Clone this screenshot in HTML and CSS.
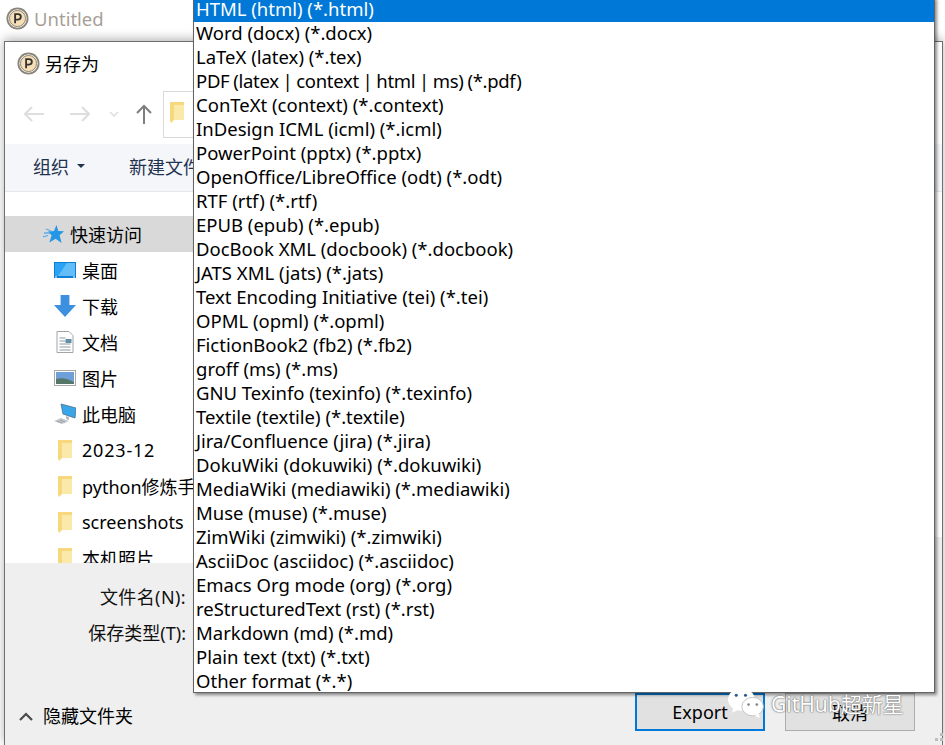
FILE: index.html
```html
<!DOCTYPE html>
<html lang="zh">
<head>
<meta charset="utf-8">
<title>Export</title>
<link rel="stylesheet" href="styles.css">
</head>
<body>
<header class="appbar">
  <svg class="logo" viewBox="0 0 24 24"><circle cx="12" cy="12" r="11.500" fill="#8a8378"/><circle cx="12" cy="12" r="9.600" fill="#fff"/><circle cx="12" cy="12" r="8.400" fill="#f6dfb4" stroke="#6b6255" stroke-width=".8"/><path d="M9.500 17V7.500h3.200a2.800 2.800 0 0 1 0 5.600H9.500" fill="none" stroke="#333" stroke-width="1.900"/></svg>
  <span class="apptitle">Untitled</span>
</header>
<main class="dialog">
  <div class="dlgtitle">
    <svg class="logo" viewBox="0 0 24 24"><circle cx="12" cy="12" r="11.500" fill="#8a8378"/><circle cx="12" cy="12" r="9.600" fill="#fff"/><circle cx="12" cy="12" r="8.400" fill="#f6dfb4" stroke="#6b6255" stroke-width=".8"/><path d="M9.500 17V7.500h3.200a2.800 2.800 0 0 1 0 5.600H9.500" fill="none" stroke="#333" stroke-width="1.900"/></svg>
    <span>另存为</span>
  </div>
  <div class="navbar">
    <svg class="nav n1" viewBox="0 0 20 16"><path d="M1 8h19M8 1 1 8l7 7" fill="none" stroke="#dedede" stroke-width="2.200"/></svg>
    <svg class="nav n2" viewBox="0 0 20 16"><path d="M0 8h19M12 1l7 7-7 7" fill="none" stroke="#dedede" stroke-width="2.200"/></svg>
    <svg class="chev" viewBox="0 0 10 6"><path d="M1 1l4 4 4-4" fill="none" stroke="#dedede" stroke-width="1.600"/></svg>
    <svg class="up" viewBox="0 0 16 20"><path d="M8 20V2M1 9l7-7 7 7" fill="none" stroke="#7e7e7e" stroke-width="2"/></svg>
    <div class="path"><svg class="folder" viewBox="0 0 14 21"><path d="M0 0h14v18H4l-3 3-1-2z" fill="#f7d87c"/><path d="M4 3h10v15H4z" fill="#fbe9a9"/></svg></div>
  </div>
  <div class="toolbar">
    <span class="org">组织<i class="caret"></i></span>
    <span>新建文件夹</span>
  </div>
  <nav class="tree">
    <div class="row quick">
      <svg class="ticon" viewBox="0 0 21 18"><path d="M13.500 0l1.800 6 5.700.2-4.400 4 2 7.800-6-4.200-6.200 3.700 2.200-7.300-3.600-3.800 6-.4z" fill="#2496e6"/><path d="M3 4l5 2M1 8h6M0 12l5-1.500" stroke="#58aeea" stroke-width="1.300"/></svg>
      <span>快速访问</span>
    </div>
    <div class="row sub">
      <span class="ibox"><svg viewBox="0 0 22 16"><rect width="22" height="16" fill="#0f7fd6"/><path d="M1 1h20v13H1z" fill="#2aa3f5"/><path d="M13 1h8v13H4z" fill="#62bdf8"/><path d="M1 15h2M19 15h2" stroke="#fff"/></svg></span>
      <span>桌面</span>
    </div>
    <div class="row sub">
      <span class="ibox"><svg viewBox="0 0 20 20"><path d="M6 0h8v9h6l-10 11L0 9h6z" fill="#3d8fe0"/></svg></span>
      <span>下载</span>
    </div>
    <div class="row sub">
      <span class="ibox"><svg viewBox="0 0 17 22"><path d="M.500.500h12l4 4v17H.500z" fill="#fff" stroke="#a4a4a4"/><path d="M3 7h6M3 10h6M3 13h11M3 16h11M3 19h11" stroke="#8d9aa6"/><rect x="9" y="8" width="6" height="4" fill="#5f8fa8"/></svg></span>
      <span>文档</span>
    </div>
    <div class="row sub">
      <span class="ibox"><svg viewBox="0 0 22 16"><rect x=".500" y=".500" width="21" height="15" fill="#fff" stroke="#a8a8a8"/><rect x="2" y="2" width="18" height="12" fill="#6f9fd8"/><path d="M2 9c6-2 12 0 18 3v2H2z" fill="#55776a"/></svg></span>
      <span>图片</span>
    </div>
    <div class="row sub">
      <span class="ibox"><svg viewBox="0 0 22 20"><path d="M7 0l15 4-1 10-12-4z" fill="#3aa6ea" stroke="#4b6f8a" stroke-width=".8"/><path d="M12 12l3 1v3l-3-1z" fill="#b5bcc2"/><path d="M0 17l7-3 8 3-7 3z" fill="#c3c8cc"/><path d="M3 17l5 2M6 16l5 2" stroke="#8e959b" stroke-width=".8"/></svg></span>
      <span>此电脑</span>
    </div>
    <div class="row sub">
      <span class="ibox"><svg class="folder" viewBox="0 0 14 21"><path d="M0 0h14v18H4l-3 3-1-2z" fill="#f7d87c"/><path d="M4 3h10v15H4z" fill="#fbe9a9"/></svg></span>
      <span class="digits">2023-12</span>
    </div>
    <div class="row sub">
      <span class="ibox"><svg class="folder" viewBox="0 0 14 21"><path d="M0 0h14v18H4l-3 3-1-2z" fill="#f7d87c"/><path d="M4 3h10v15H4z" fill="#fbe9a9"/></svg></span>
      <span>python修炼手册</span>
    </div>
    <div class="row sub">
      <span class="ibox"><svg class="folder" viewBox="0 0 14 21"><path d="M0 0h14v18H4l-3 3-1-2z" fill="#f7d87c"/><path d="M4 3h10v15H4z" fill="#fbe9a9"/></svg></span>
      <span>screenshots</span>
    </div>
    <div class="row sub">
      <span class="ibox"><svg class="folder" viewBox="0 0 14 21"><path d="M0 0h14v18H4l-3 3-1-2z" fill="#f7d87c"/><path d="M4 3h10v15H4z" fill="#fbe9a9"/></svg></span>
      <span>本机照片</span>
    </div>
  </nav>
  <section class="form">
    <div class="labels">
      <span class="wide">文件名(N):</span>
      <span>保存类型(T):</span>
    </div>
    <div class="actions">
      <span class="hide"><svg class="hidechev" viewBox="0 0 14 9"><path d="M1 8l6-6 6 6" fill="none" stroke="#4a4a4a" stroke-width="2.200"/></svg>隐藏文件夹</span>
      <div class="buttons">
        <button class="btn primary">Export</button>
        <button class="btn">取消</button>
      </div>
    </div>
  </section>
</main>
<div class="sidefill"></div>
<svg class="grip" viewBox="0 0 10 10"><path d="M7 0h3v3H7zM2 5h3v3H2zM7 5h3v3H7z" fill="#bdbdbd"/></svg>
<ul class="dropdown">
  <li class="sel">HTML (html) (*.html)</li>
  <li>Word (docx) (*.docx)</li>
  <li>LaTeX (latex) (*.tex)</li>
  <li class="tight">PDF (latex | context | html | ms) (*.pdf)</li>
  <li>ConTeXt (context) (*.context)</li>
  <li>InDesign ICML (icml) (*.icml)</li>
  <li>PowerPoint (pptx) (*.pptx)</li>
  <li>OpenOffice/LibreOffice (odt) (*.odt)</li>
  <li>RTF (rtf) (*.rtf)</li>
  <li>EPUB (epub) (*.epub)</li>
  <li>DocBook XML (docbook) (*.docbook)</li>
  <li>JATS XML (jats) (*.jats)</li>
  <li>Text Encoding Initiative (tei) (*.tei)</li>
  <li>OPML (opml) (*.opml)</li>
  <li>FictionBook2 (fb2) (*.fb2)</li>
  <li>groff (ms) (*.ms)</li>
  <li>GNU Texinfo (texinfo) (*.texinfo)</li>
  <li>Textile (textile) (*.textile)</li>
  <li>Jira/Confluence (jira) (*.jira)</li>
  <li>DokuWiki (dokuwiki) (*.dokuwiki)</li>
  <li>MediaWiki (mediawiki) (*.mediawiki)</li>
  <li>Muse (muse) (*.muse)</li>
  <li>ZimWiki (zimwiki) (*.zimwiki)</li>
  <li>AsciiDoc (asciidoc) (*.asciidoc)</li>
  <li>Emacs Org mode (org) (*.org)</li>
  <li>reStructuredText (rst) (*.rst)</li>
  <li>Markdown (md) (*.md)</li>
  <li>Plain text (txt) (*.txt)</li>
  <li>Other format (*.*)</li>
</ul>
<div class="watermark">
  <svg class="wechat" viewBox="0 0 36 30"><ellipse cx="14" cy="12" rx="13" ry="11" fill="#fff"/><path d="M6 20l-1 5 6-3z" fill="#fff"/><ellipse cx="25" cy="19" rx="10.500" ry="9" fill="#fff" stroke="#bbb" stroke-width=".8"/><path d="M31 26l1 4-5-2z" fill="#fff"/><circle cx="9" cy="8" r="1.500" fill="#2a5a90"/><circle cx="18" cy="8" r="1.500" fill="#2a5a90"/><circle cx="21" cy="17" r="1.300" fill="#888"/><circle cx="29" cy="17" r="1.300" fill="#888"/></svg>
  <span>GitHub超新星</span>
</div>
```
FILE: styles.css
```css
* { box-sizing: border-box; }
html, body { margin: 0; padding: 0; }
body {
  width: 945px;
  height: 745px;
  overflow: hidden;
  position: relative;
  background: #fff;
  font-family: "Noto Sans", "Noto Sans CJK SC", sans-serif;
  font-size: 18px;
  color: #000;
}
.appbar {
  height: 41px;
  display: flex;
  align-items: center;
  gap: 5px;
  padding: 0 0 5px 6px;
}
.logo { width: 23px; height: 23px; flex: none; }
.apptitle { font-size: 18.500px; color: #a79f97; }
.dialog {
  height: 704px;
  margin: 0 2px 0 4px;
  border: 1px solid #6f6f6f;
  border-bottom: 0;
  display: flex;
  flex-direction: column;
  background: #fff;
  box-shadow: 0 -2px 10px rgba(0,0,0,.3);
}
.dlgtitle {
  height: 42px;
  padding: 0 0 0 12px;
  display: flex;
  align-items: center;
  gap: 5px;
}
.navbar {
  height: 60px;
  display: flex;
  align-items: center;
  padding-left: 19px;
}
.nav { width: 20px; height: 16px; flex: none; }
.n2 { margin-left: 26px; }
.chev { width: 10px; height: 6px; margin-left: 19px; flex: none; }
.up { width: 16px; height: 20px; margin-left: 17px; flex: none; }
.path {
  width: 300px;
  height: 47px;
  margin-left: 11px;
  border: 1px solid #d9d9d9;
  padding: 10px 0 0 6px;
}
.folder { width: 14px; height: 21px; display: block; }
.toolbar {
  height: 48px;
  background: #f4f6f9;
  border-bottom: 1px solid #e6e7e9;
  display: flex;
  align-items: center;
  padding: 0 0 3px 28px;
  gap: 44px;
  color: #1f3350;
  white-space: nowrap;
}
.org { display: inline-flex; align-items: center; gap: 8px; }
.caret {
  width: 0; height: 0;
  border-left: 4px solid transparent;
  border-right: 4px solid transparent;
  border-top: 4px solid #1f3350;
}
.tree {
  height: 371px;
  overflow: hidden;
  padding-top: 24px;
}
.row {
  height: 36px;
  display: flex;
  align-items: center;
  white-space: nowrap;
}
.quick { background: #d9d9d9; width: 300px; padding-left: 38px; gap: 6px; }
.ticon { width: 21px; height: 18px; flex: none; }
.sub { padding-left: 48px; gap: 5px; }
.digits { letter-spacing: .8px; }
.ibox { width: 24px; height: 24px; display: flex; align-items: center; justify-content: center; flex: none; }
.ibox svg { width: 22px; height: 22px; display: block; }
.ibox svg.folder { width: 14px; height: 21px; }
.form {
  flex: 1;
  background: #efefef;
  display: flex;
  flex-direction: column;
}
.labels {
  width: 181px;
  height: 130px;
  padding-top: 22px;
  display: flex;
  flex-direction: column;
  align-items: flex-end;
  gap: 11px;
  line-height: 25px;
  white-space: nowrap;
  color: #111;
}
.wide { letter-spacing: .4px; }
.actions {
  display: flex;
  justify-content: space-between;
  align-items: flex-start;
  padding-left: 14px;
  padding-right: 27px;
}
.hide { display: inline-flex; align-items: center; gap: 10px; margin-top: 11px; line-height: 25px; }
.hidechev { width: 14px; height: 9px; }
.buttons { display: flex; gap: 20px; }
.btn {
  width: 130px;
  height: 38px;
  background: #e1e1e1;
  border: 1px solid #adadad;
  font: inherit;
  padding: 0;
  color: #000;
}
.primary { border: 2px solid #0078d7; }
.sidefill {
  position: absolute;
  left: 935px;
  top: 537px;
  width: 7px;
  height: 27px;
  background: #efefef;
}
.grip {
  position: absolute;
  left: 933px;
  top: 733px;
  width: 10px;
  height: 10px;
}
.dropdown {
  position: absolute;
  left: 193px;
  top: -3px;
  width: 742px;
  height: 696px;
  margin: 0;
  padding: 0;
  list-style: none;
  background: #fff;
  border: 1px solid #646464;
  box-shadow: 2px 2px 3px rgba(0,0,0,.45);
  font-size: 18.500px;
}
.dropdown li {
  height: 24px;
  line-height: 22px;
  padding-left: 2px;
  white-space: nowrap;
}
.dropdown .tight { letter-spacing: -.3px; word-spacing: -.7px; }
.dropdown .sel { background: #0078d7; color: #fff; }
.watermark {
  position: absolute;
  left: 727px;
  top: 687px;
  display: flex;
  align-items: center;
  gap: 7px;
  color: #fff;
  font-size: 21px;
  text-shadow: 0 0 2px #666, 0 0 1px #666;
}
.wechat { width: 37px; height: 31px; }
```
